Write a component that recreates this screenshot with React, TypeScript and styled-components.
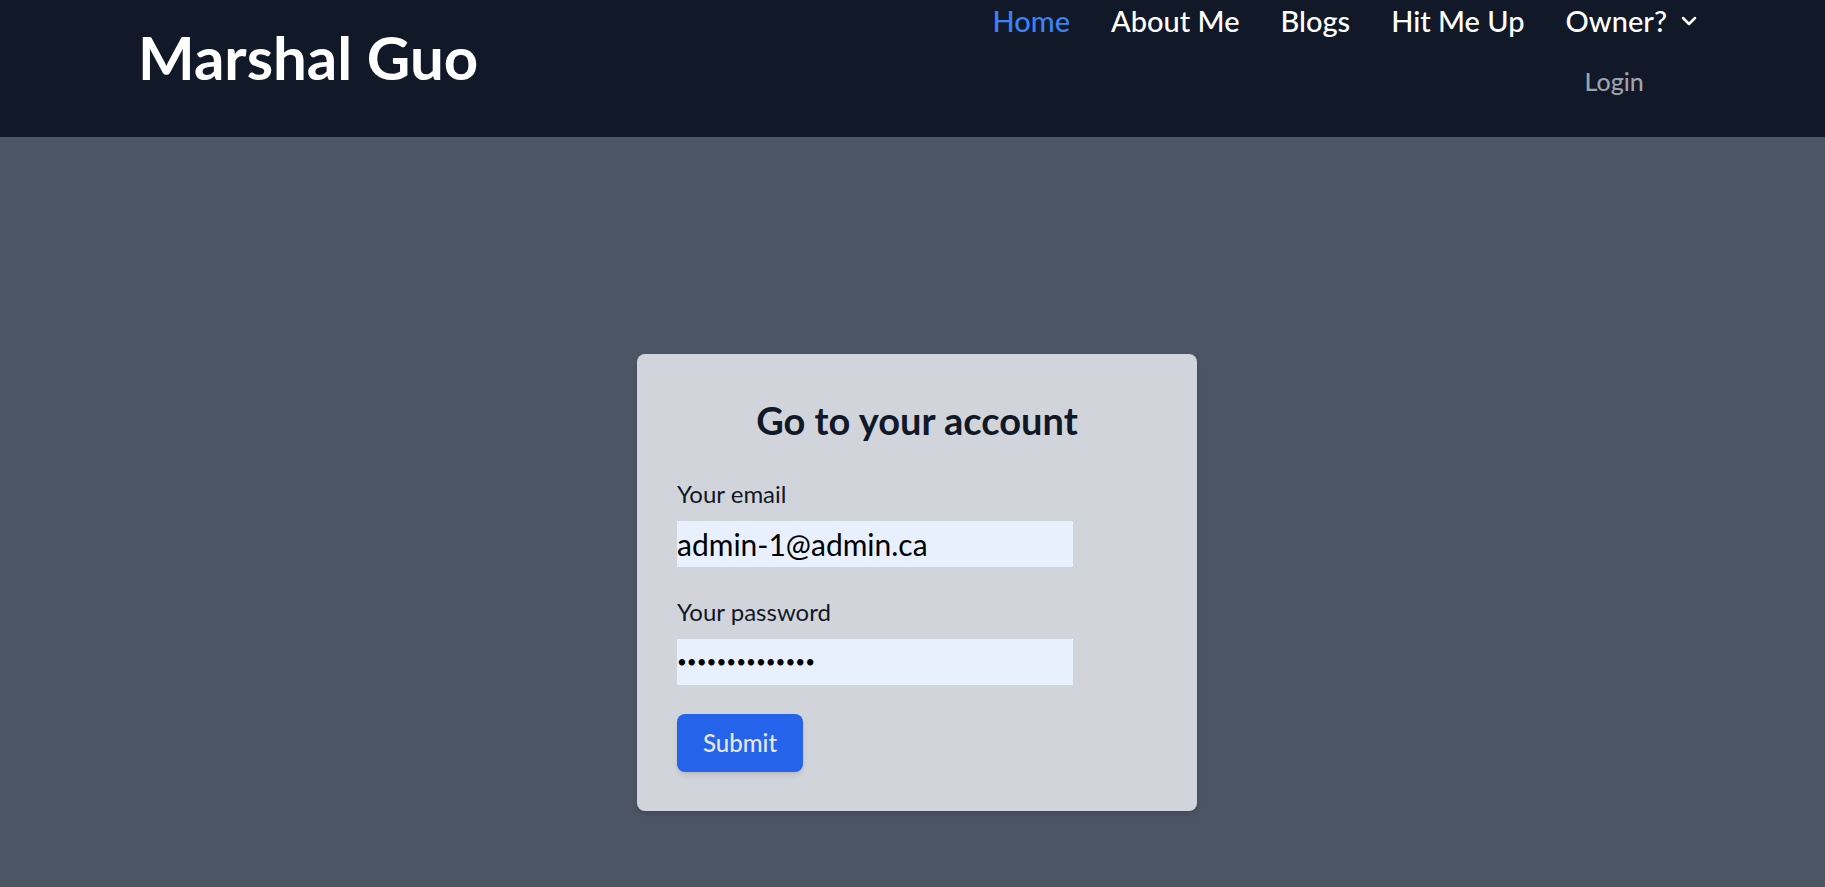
import React from "react";
import styled, { createGlobalStyle } from "styled-components";
import { ChevronDown } from "lucide-react";

const GlobalStyle = createGlobalStyle`
  html, body {
    margin: 0;
    padding: 0;
    background: #4b5563;
    font-family: "Lato", "Noto Sans", sans-serif;
  }
  * { box-sizing: border-box; }
`;

const Header = styled.header`
  display: flex;
  justify-content: space-between;
  align-items: flex-start;
  min-height: 137px;
  background: #111827;
  padding: 0 124px 0 138px;
`;

const Logo = styled.a`
  margin-top: 27px;
  font-size: 60px;
  line-height: 60px;
  font-weight: 700;
  color: #ffffff;
  text-decoration: none;
`;

const Nav = styled.nav`
  display: flex;
  align-items: flex-start;
  gap: 41px;
  padding-top: 3px;
`;

const NavLink = styled.a<{ $active?: boolean }>`
  font-size: 29px;
  line-height: 36px;
  font-weight: 500;
  color: ${(p) => (p.$active ? "#3b82f6" : "#ffffff")};
  text-decoration: none;
  white-space: nowrap;
`;

const Dropdown = styled.div`
  display: flex;
  flex-direction: column;
  align-items: flex-start;
`;

const DropdownToggle = styled.button`
  display: flex;
  align-items: center;
  gap: 10px;
  padding: 0;
  border: none;
  background: none;
  font-family: inherit;
  font-size: 29px;
  line-height: 36px;
  font-weight: 500;
  color: #ffffff;
  cursor: pointer;
`;

const DropdownMenu = styled.div`
  display: flex;
  flex-direction: column;
  padding: 26px 0 0 19px;
`;

const MenuItem = styled.a`
  font-size: 25px;
  line-height: 32px;
  font-weight: 500;
  color: #9ca3af;
  text-decoration: none;
`;

const Main = styled.main`
  display: flex;
  justify-content: center;
  align-items: center;
  min-height: 100vh;
  padding: 3px 0 0 9px;
`;

const Card = styled.form`
  display: flex;
  flex-direction: column;
  width: 560px;
  padding: 46px 40px 39px;
  background: #d1d5db;
  border-radius: 8px;
  box-shadow: 0 4px 6px -1px rgba(0, 0, 0, 0.1), 0 2px 4px -2px rgba(0, 0, 0, 0.1);
`;

const Title = styled.h1`
  margin: 0 0 38px;
  text-align: center;
  font-size: 38px;
  line-height: 40px;
  font-weight: 700;
  color: #111827;
`;

const Field = styled.div`
  display: flex;
  flex-direction: column;
  align-items: flex-start;
  margin-bottom: 29px;
`;

const Label = styled.label`
  font-size: 24px;
  line-height: 32px;
  font-weight: 400;
  color: #111827;
  margin-bottom: 11px;
`;

const Input = styled.input<{ $masked?: boolean }>`
  width: 396px;
  height: 46px;
  padding: 0;
  border: none;
  outline: none;
  background: #e8f0fe;
  font-family: inherit;
  font-size: ${(p) => (p.$masked ? "17px" : "30px")};
  color: #000000;
`;

const SubmitButton = styled.button`
  align-self: flex-start;
  height: 58px;
  padding: 0 26px;
  border: none;
  border-radius: 8px;
  background: #2563eb;
  color: #e5e7eb;
  font-family: inherit;
  font-size: 24px;
  font-weight: 500;
  box-shadow: 0 4px 6px -1px rgba(0, 0, 0, 0.1), 0 2px 4px -2px rgba(0, 0, 0, 0.1);
  cursor: pointer;
`;

export default function App() {
  return (
    <>
      <GlobalStyle />
      <Header>
        <Logo href="#">Marshal Guo</Logo>
        <Nav>
          <NavLink href="#" $active>Home</NavLink>
          <NavLink href="#">About Me</NavLink>
          <NavLink href="#">Blogs</NavLink>
          <NavLink href="#">Hit Me Up</NavLink>
          <Dropdown>
            <DropdownToggle type="button">
              Owner?
              <ChevronDown size={24} strokeWidth={2.5} />
            </DropdownToggle>
            <DropdownMenu>
              <MenuItem href="#">Login</MenuItem>
            </DropdownMenu>
          </Dropdown>
        </Nav>
      </Header>
      <Main>
        <Card onSubmit={(e) => e.preventDefault()}>
          <Title>Go to your account</Title>
          <Field>
            <Label htmlFor="email">Your email</Label>
            <Input id="email" type="email" defaultValue="admin-1@admin.ca" />
          </Field>
          <Field>
            <Label htmlFor="password">Your password</Label>
            <Input id="password" type="password" $masked defaultValue="adminpassword1" />
          </Field>
          <SubmitButton type="submit">Submit</SubmitButton>
        </Card>
      </Main>
    </>
  );
}
